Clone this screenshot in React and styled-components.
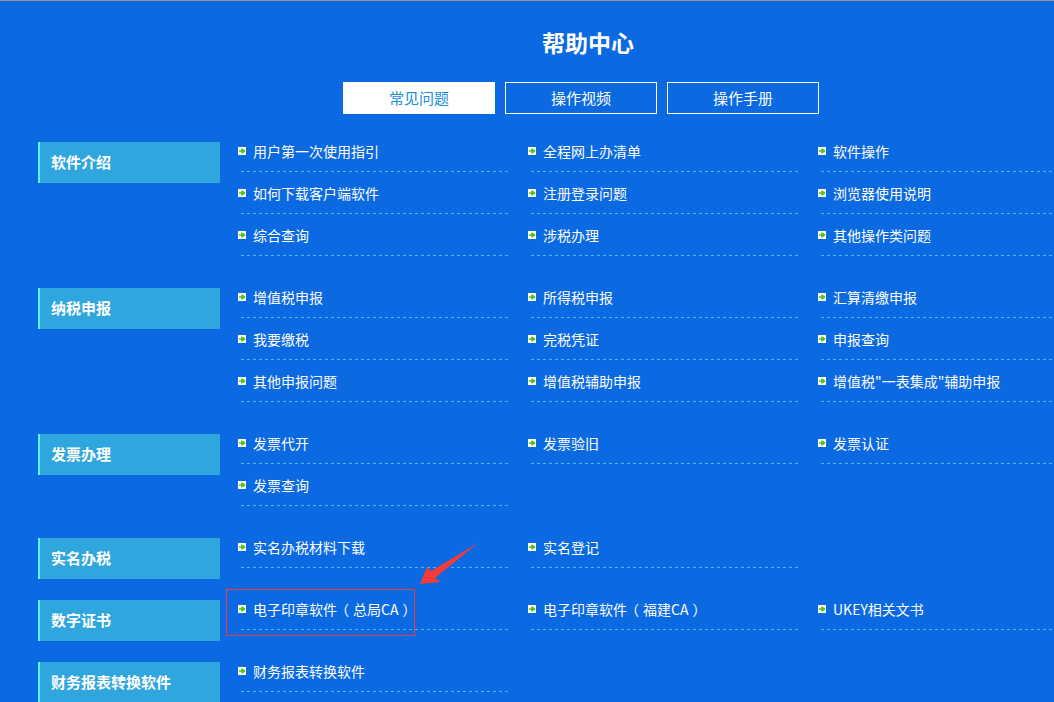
import styled, { createGlobalStyle } from "styled-components"

const GlobalStyle = createGlobalStyle`
html,body{
  margin:0;
  padding:0;
  background:#0b69e1;
  overflow:hidden;
}
body{
  font-family:"Noto Sans CJK SC","Liberation Sans",sans-serif;
}
`

const Page = styled.div`
position:relative;
width:1054px;
height:702px;
overflow:hidden;
background:#0b69e1;
border-top:1px solid #9a968a;
box-sizing:border-box;
`
const Header = styled.div`
width:476px;
margin-left:343px;
padding-top:26px;
`
const Title = styled.h1`
margin:0;
padding-left:14px;
text-align:center;
color:#fff;
font-size:23px;
line-height:30px;
font-weight:700;
`
const Tabs = styled.div`
display:flex;
gap:10px;
margin-top:25px;
`
const Tab = styled.div`
width:152px;
height:32px;
box-sizing:border-box;
border:1px solid #fff;
background:${(p) => (p.active ? "#fff" : "transparent")};
color:${(p) => (p.active ? "#1a8ed4" : "#fff")};
font-size:15px;
line-height:29px;
text-align:center;
`
const Content = styled.div`
padding:28px 0 0 38px;
`
const Section = styled.div`
display:flex;
align-items:flex-start;
margin-bottom:20px;
`
const Label = styled.div`
flex:none;
width:182px;
height:41px;
box-sizing:border-box;
border-left:2px solid #5ff3ff;
background:#2fa6de;
padding-left:11px;
color:#fff;
font-size:15px;
font-weight:700;
line-height:39px;
`
const Items = styled.div`
display:grid;
grid-template-columns:repeat(3,270px);
column-gap:20px;
margin-left:18px;
`
const Item = styled.div`
position:relative;
height:42px;
padding-left:15px;
color:#fff;
font-size:14px;
line-height:18px;
white-space:nowrap;
&::before{
  content:"";
  position:absolute;
  left:0;
  top:5px;
  width:8px;
  height:8px;
  background:#fff;
}
&::after{
  content:"";
  position:absolute;
  left:3px;
  right:0;
  top:29px;
  height:1px;
  background:repeating-linear-gradient(90deg,#4cb8ea 0 3px,transparent 3px 6px);
}
`
const Paren = styled.span`
display:inline-block;
margin:${(p) => (p.open ? "0 4px 0 -2px" : "0 -2px 0 4px")};
`
const Plus = styled.svg`
position:absolute;
left:0;
top:5px;
width:8px;
height:8px;
z-index:1;
`
const Highlight = styled.div`
position:absolute;
left:226px;
top:588px;
width:189px;
height:47px;
box-sizing:border-box;
border:1px solid #f23b3b;
`
const Arrow = styled.svg`
position:absolute;
left:410px;
top:535px;
width:80px;
height:60px;
`

const sections = [
  { name: "软件介绍", items: ["用户第一次使用指引", "全程网上办清单", "软件操作", "如何下载客户端软件", "注册登录问题", "浏览器使用说明", "综合查询", "涉税办理", "其他操作类问题"] },
  { name: "纳税申报", items: ["增值税申报", "所得税申报", "汇算清缴申报", "我要缴税", "完税凭证", "申报查询", "其他申报问题", "增值税辅助申报", "增值税\"一表集成\"辅助申报"] },
  { name: "发票办理", items: ["发票代开", "发票验旧", "发票认证", "发票查询"] },
  { name: "实名办税", items: ["实名办税材料下载", "实名登记"] },
  { name: "数字证书", items: ["电子印章软件（总局CA）", "电子印章软件（福建CA）", "UKEY相关文书"] },
  { name: "财务报表转换软件", items: ["财务报表转换软件"] },
]

// full-width brackets get a little extra room, as in the original font
const renderText = (t) =>
  t.split(/([（）])/).map((part, i) =>
    part === "（" || part === "）" ? <Paren key={i} open={part === "（"}>{part}</Paren> : part
  )

const App = () => {
  return (
    <Page>
      <GlobalStyle />
      <Header>
        <Title>帮助中心</Title>
        <Tabs>
          <Tab active>常见问题</Tab>
          <Tab>操作视频</Tab>
          <Tab>操作手册</Tab>
        </Tabs>
      </Header>
      <Content>
        {sections.map((s) => (
          <Section key={s.name}>
            <Label>{s.name}</Label>
            <Items>
              {s.items.map((it) => (
                <Item key={it}>
                  <Plus viewBox="0 0 8 8">
                    <path d="M1 4h5M4 1.5v5M5 2.5l1.5 1.5L5 5.5" stroke="#4fc21a" strokeWidth="1.6" fill="none" />
                  </Plus>
                  {renderText(it)}
                </Item>
              ))}
            </Items>
          </Section>
        ))}
      </Content>
      <Highlight />
      <Arrow viewBox="0 0 80 60">
        <polygon points="10,48 17,31 21,35 68,7 25,42 31,46" fill="#f23b3b" />
      </Arrow>
    </Page>
  )
}

export default App
